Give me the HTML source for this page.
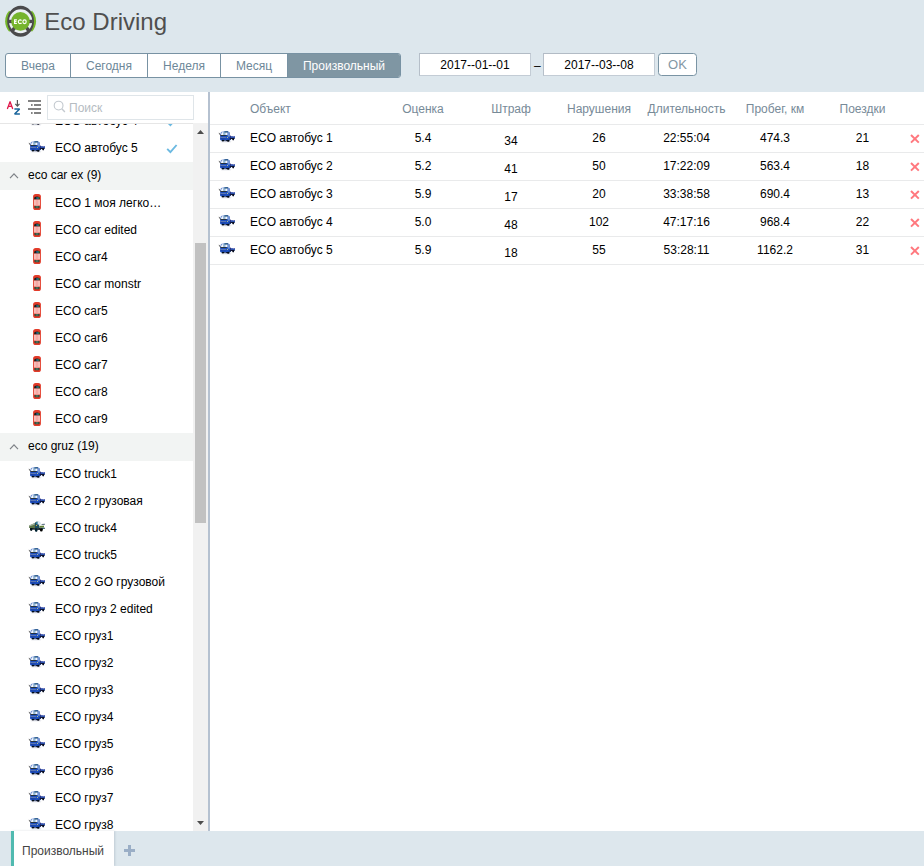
<!DOCTYPE html>
<html><head><meta charset="utf-8">
<style>
*{box-sizing:border-box;margin:0;padding:0}
html,body{width:924px;height:866px;overflow:hidden;background:#dde7ed;font-family:"Liberation Sans",sans-serif;font-size:12px;color:#000}
.abs{position:absolute}
#title{left:44.3px;top:8px;font-size:24px;line-height:28px;color:#4f4f4f;white-space:nowrap}
#tabs{left:5px;top:53px;height:25px;display:flex;border:1px solid #7892a3;border-radius:3px;background:#fff;overflow:hidden}
#tabs div{height:23px;line-height:25px;text-align:center;color:#6d8798;font-size:12px;border-right:1px solid #7892a3}
#tabs div:last-child{border-right:0;background:#7f96a3;color:#fff}
.date{top:53px;width:112px;height:23px;background:#fff;border:1px solid #c3ccd5;border-top-color:#b2bbc5;border-left-color:#b6bfc9;text-align:center;line-height:22px;font-size:12px;color:#000}
#ok{left:658px;top:53px;width:39px;height:23px;border:1px solid #7a94a4;border-radius:3.5px;background:#fff;color:#8397a4;font-size:13px;text-align:center;line-height:21.5px}
#side{left:0;top:92px;width:208px;height:739px;background:#fff;overflow:hidden}
#vsep{left:208px;top:92px;width:2px;height:739px;background:#b5c1d0}
#main{left:210px;top:92px;width:714px;height:739px;background:#fff}
#search{left:47px;top:3px;width:147px;height:25px;border:1px solid #dfe5e9;background:#fff;color:#b5bcc2;font-size:12px;line-height:25px;padding-left:21px}
#list{left:0;top:32px;width:193px;height:707px;overflow:hidden}
.it{position:absolute;left:0;width:193px;height:27px;line-height:27px;padding-left:55px;white-space:nowrap}
.gr{position:absolute;left:0;width:193px;height:28px;line-height:27px;padding-left:28px;background:#f2f4f3;white-space:nowrap}
.ic{position:absolute;left:28px;top:3px;width:18px;height:18px}
.tk{position:absolute;left:26px;top:3px;width:22px;height:18px}
.chk{position:absolute;left:166px;top:9px;width:12px;height:10px}
.chev{position:absolute;left:9px;top:10.6px;width:10px;height:6px}
#track{left:193px;top:31px;width:15px;height:708px;background:#f1f1f1}
#thumb{left:195px;top:151px;width:11px;height:280px;background:#c1c1c1}
table{border-collapse:collapse;position:absolute;left:0;top:0;width:714px;table-layout:fixed}
th{height:32px;padding-top:2px;font-weight:normal;color:#778a98;font-size:12px;text-align:center;border-bottom:1px solid #e9eaeb}
td{height:28px;text-align:center;border-bottom:1px solid #e9eaeb;font-size:12px;position:relative}
th.l,td.l{text-align:left}
td .tk{left:6px;top:3px}
td.p{padding-top:6px}
.x{position:absolute;left:3.8px;top:9.2px;width:10px;height:10px}
#bottom{left:0;top:831px;width:924px;height:35px;background:#dde7ed}
#btab{box-shadow:1px 0 2px rgba(60,80,100,0.18);left:11px;top:831px;width:103px;height:35px;background:#fff;border-left:3px solid #50bab0;color:#444;font-size:12px;line-height:41px;padding-left:8px}
</style></head><body>
<svg width="0" height="0" style="position:absolute">
<defs>
<filter id="bl" x="-10%" y="-10%" width="120%" height="120%"><feGaussianBlur stdDeviation="0.28"/></filter>
<symbol id="truck" viewBox="0 0 22 18">
 <g filter="url(#bl)">
 <ellipse cx="10" cy="13.8" rx="5.5" ry="0.5" fill="#a7aec0" opacity="0.5"/>
 <path d="M4.2 7.4 L5 4 L8.6 3.5 L11.8 3.3 L13.6 4.4 L13.9 8.1 L18.8 8 L18.8 10.6 L14 12.2 L12 13 L5 12.4 L4 11.4Z" fill="#1e50bf"/>
 <path d="M11.6 3.6 L13.6 4.5 L13.9 8.6 L11.8 8.8Z" fill="#7596d4"/>
 <path d="M5 7 L5.5 4.3 L11.4 3.8 L11.6 7.1Z" fill="#f4f7fb"/>
 <path d="M7.3 4.3 L9.3 4.1 L9.3 6.9 L7.5 6.9Z" fill="#3a78b4" opacity="0.8"/>
 <path d="M8.3 4.2 L8.8 4.2 L8.6 6.9 L8.1 6.9Z" fill="#c9dcee"/>
 <path d="M8.4 3.5 L11.8 3.3 L11.7 4.4 L8.6 4.6Z" fill="#0d4468"/>
 <path d="M4.5 6.9 L10.6 6.9 L10.6 7.7 L4.4 7.8Z" fill="#2b2a12"/>
 <path d="M4.3 9.1 L10 9.2 L10 9.9 L4.3 9.8Z" fill="#6f85b0"/>
 <path d="M4.6 10.5 L9.6 10.8 L9.6 11.3 L4.6 11Z" fill="#16368f"/>
 <circle cx="11.4" cy="9.5" r="0.55" fill="#e6e07a"/>
 <path d="M14.1 8.2 L18.8 8 L18.8 10 L14.1 10.3Z" fill="#2a51a8"/>
 <path d="M15.2 8.1 L18.6 7.9 L18.6 8.5 L15.2 8.7Z" fill="#6f83c9"/>
 <path d="M17.2 8 L18.3 8 L18.3 8.8 L17.2 8.8Z" fill="#c39ec4" opacity="0.8"/>
 <path d="M14.2 7.4 L14.9 7.4 L14.9 10.4 L14.2 10.4Z" fill="#2a2675"/>
 <path d="M13.6 10.3 L18.8 10 L18.2 11 L13.8 11.7Z" fill="#0b0e22"/>
 <path d="M14.9 11.1 L16.3 10.9 L16.3 11.9 L14.9 12.1Z" fill="#f4f6fa"/>
 <path d="M6 12 L13 12.3 L12.8 13.2 L6.2 13Z" fill="#0a0f2a"/>
 <rect x="8.4" y="12.3" width="1.3" height="0.8" fill="#9fb6e0"/>
 <ellipse cx="6.9" cy="12.6" rx="1.2" ry="0.9" fill="#060919"/>
 <ellipse cx="12.3" cy="12.8" rx="1.3" ry="1" fill="#060919"/>
 <ellipse cx="17.2" cy="11.3" rx="0.9" ry="1.1" fill="#060919"/>
 <path d="M3 4.9 L4.4 7.2" stroke="#444" stroke-width="0.8"/>
 </g>
</symbol>
<symbol id="mil" viewBox="0 0 22 18">
 <g filter="url(#bl)">
 <path d="M3 7.4 L8.8 5 L11 3.4 L9.4 10.2 L3.2 10Z" fill="#5a7446"/>
 <path d="M3 7.4 L8.8 5 L10.6 3.6 L9.8 6.2 L3.2 8.6Z" fill="#b4c2b6" opacity="0.8"/>
 <path d="M8.8 5 L11 3.6 L13.2 4 L13.4 10.4 L9 10.4Z" fill="#1f4d5e"/>
 <path d="M11 3.6 L13.6 3.4 L15 5 L14.6 6.8 L11.6 6.6Z" fill="#dbe7f0"/>
 <path d="M10 4.2 L11.6 3.8 L11.6 5.6 L10 6Z" fill="#2f7f9e"/>
 <circle cx="10.5" cy="7.4" r="0.6" fill="#d8b23a"/>
 <path d="M13.4 6.8 L18.2 6.6 L18.2 7.8 L13.4 8Z" fill="#e6ebe6"/>
 <path d="M15.6 5.9 L18.8 5.8 L18.8 6.7 L15.6 6.8Z" fill="#39506a"/>
 <path d="M13.4 7.9 L18 7.8 L18 9.6 L13.4 9.8Z" fill="#5f8030"/>
 <path d="M12.6 9.8 L19 9.7 L19 10.7 L12.6 10.9Z" fill="#1d4a58"/>
 <circle cx="14.5" cy="10.3" r="0.45" fill="#d8664f"/>
 <path d="M4 10 L17 10.4 L16.6 12 L4.4 11.6Z" fill="#061018"/>
 <ellipse cx="5.2" cy="11.5" rx="1.2" ry="1.4" fill="#04121a"/>
 <ellipse cx="10.2" cy="12.1" rx="1.4" ry="1.8" fill="#062430"/>
 <ellipse cx="15.3" cy="12" rx="1.4" ry="1.5" fill="#020406"/>
 </g>
</symbol>
<symbol id="car" viewBox="0 0 18 18">
 <g filter="url(#bl)">
 <rect x="5.1" y="0.9" width="7.8" height="16.1" rx="2.6" fill="#e23b29"/>
 <path d="M5.9 6.6 L6.6 3.9 Q9 3 11.4 3.9 L12.1 6.6Z" fill="#16201c"/>
 <path d="M8.2 4 L10.8 4.2 L11 6.2 L8.4 6.2Z" fill="#2a5f8a"/>
 <path d="M10 4.1 L11.2 4.3 L11.4 6 L10.2 6Z" fill="#2f7a3a"/>
 <rect x="6" y="6.6" width="6" height="6" fill="#f9bdb8"/>
 <rect x="7.8" y="7" width="2.4" height="5.4" fill="#f5a9a4"/>
 <rect x="6.5" y="12.9" width="5" height="2.3" rx="0.7" fill="#254636"/>
 <rect x="7.6" y="13.6" width="2.8" height="0.8" fill="#7fa08c"/>
 </g>
</symbol>
<symbol id="chk" viewBox="0 0 12 10"><path d="M1.2 4.9 L4.4 8.1 L10.6 1" fill="none" stroke="#6bb9e1" stroke-width="1.9"/></symbol>
<symbol id="chev" viewBox="0 0 10 6"><path d="M1 5.2 L5 0.9 L9 5.2" fill="none" stroke="#7d8186" stroke-width="1.2"/></symbol>
<symbol id="x" viewBox="0 0 10 10"><path d="M1 1 L8.8 8.6 M8.8 1 L1 8.6" fill="none" stroke="#ff787e" stroke-width="2"/></symbol>
</defs></svg>

<svg class="abs" style="left:0;top:0" width="42" height="42" viewBox="0 0 42 42">
 <defs><clipPath id="wg"><path d="M20.6 21.25 L33.03 9.66 A17 17 0 0 1 33.03 32.84Z M20.6 21.25 L8.17 32.84 A17 17 0 0 1 8.17 9.66Z"/></clipPath></defs>
 <circle cx="20.6" cy="21.25" r="15.45" fill="#76b82a" clip-path="url(#wg)"/>
 <circle cx="20.6" cy="21.25" r="12.6" fill="#ebf0f4"/>
 <path fill-rule="evenodd" fill="#4a4a4c" d="M7.200000000000001 21.25 a13.4 15.5 0 1 0 26.8 0 a13.4 15.5 0 1 0 -26.8 0Z M9.000000000000002 21.25 a11.6 11.9 0 1 0 23.2 0 a11.6 11.9 0 1 0 -23.2 0Z"/>
 <path d="M8.600000000000001 21.45 H32.6" stroke="#4a4a4c" stroke-width="3.4"/>
 <path d="M15.600000000000001 26.65 L11.400000000000002 31.85 M25.6 26.65 L29.8 31.85" stroke="#4a4a4c" stroke-width="3.4"/>
 <circle cx="20.450000000000003" cy="21.35" r="9.3" fill="#76b42e"/>
 <g fill="none" stroke="#fff" stroke-width="1.15">
  <path d="M16.9 19.9 H14.6 V23.5 H16.9 M14.6 21.65 H16.5"/>
  <path d="M21.5 20.6 A1.75 1.85 0 1 0 21.5 22.8"/>
  <ellipse cx="24.55" cy="21.7" rx="1.65" ry="1.85"/>
 </g>
</svg>
<div class="abs" id="title">Eco Driving</div>
<div class="abs" id="tabs"><div style="width:65px">Вчера</div><div style="width:77px">Сегодня</div><div style="width:73px">Неделя</div><div style="width:67px">Месяц</div><div style="width:112px">Произвольный</div></div>
<div class="abs date" style="left:419px">2017--01--01</div>
<div class="abs" style="left:534px;top:59px;font-size:12px">–</div>
<div class="abs date" style="left:543px">2017--03--08</div>
<div class="abs" id="ok">OK</div>
<div class="abs" id="side">
 <svg class="abs" style="left:0;top:0" width="46" height="30" viewBox="0 0 46 30">
  <path d="M7.5 16.5 L10.05 9.7 L12.6 16.5 M8.6 14.4 H11.5" fill="none" stroke="#e0174a" stroke-width="1.3" stroke-linejoin="round" stroke-linecap="round"/>
  <path d="M14.4 16.9 H19.6 L14.6 22.1 H19.9" fill="none" stroke="#1a659c" stroke-width="1.5" stroke-linejoin="bevel"/>
  <path d="M17.4 8 V14 M15.3 11.9 L17.4 14.2 L19.5 11.9" stroke="#555" stroke-width="1.2" fill="none"/>
  <path d="M28 9 H41 M34 13 H41 M28 17 H41 M34 21 H41 M31 13 H32.6 M31 21 H32.6" stroke="#595959" stroke-width="1.6" fill="none"/>
 </svg>
 <div class="abs" id="search">Поиск</div>
 <svg class="abs" style="left:53px;top:8px" width="14" height="14" viewBox="0 0 14 14"><circle cx="5.6" cy="5.6" r="4.4" fill="none" stroke="#c3c9cf" stroke-width="1.1"/><path d="M8.8 8.8 L11.9 11.9" stroke="#c3c9cf" stroke-width="1.4"/></svg>
 <div class="abs" style="left:0;top:31px;width:208px;height:1px;background:#e6e6e6"></div>
 <div class="abs" id="list">
<div class="it" style="top:-16px"><svg class="tk" viewBox="0 0 22 18"><use href="#truck"/></svg>ECO автобус 4<svg class="chk" viewBox="0 0 12 10"><use href="#chk"/></svg></div>
<div class="it" style="top:11px"><svg class="tk" viewBox="0 0 22 18"><use href="#truck"/></svg>ECO автобус 5<svg class="chk" viewBox="0 0 12 10"><use href="#chk"/></svg></div>
<div class="gr" style="top:38.0px"><svg class="chev" viewBox="0 0 10 6"><use href="#chev"/></svg>eco car ex (9)</div>
<div class="it" style="top:66px"><svg class="ic" viewBox="0 0 18 18"><use href="#car"/></svg>ECO 1 моя легко…</div>
<div class="it" style="top:93px"><svg class="ic" viewBox="0 0 18 18"><use href="#car"/></svg>ECO car edited</div>
<div class="it" style="top:120px"><svg class="ic" viewBox="0 0 18 18"><use href="#car"/></svg>ECO car4</div>
<div class="it" style="top:147px"><svg class="ic" viewBox="0 0 18 18"><use href="#car"/></svg>ECO car monstr</div>
<div class="it" style="top:174px"><svg class="ic" viewBox="0 0 18 18"><use href="#car"/></svg>ECO car5</div>
<div class="it" style="top:201px"><svg class="ic" viewBox="0 0 18 18"><use href="#car"/></svg>ECO car6</div>
<div class="it" style="top:228px"><svg class="ic" viewBox="0 0 18 18"><use href="#car"/></svg>ECO car7</div>
<div class="it" style="top:255px"><svg class="ic" viewBox="0 0 18 18"><use href="#car"/></svg>ECO car8</div>
<div class="it" style="top:282px"><svg class="ic" viewBox="0 0 18 18"><use href="#car"/></svg>ECO car9</div>
<div class="gr" style="top:309.0px"><svg class="chev" viewBox="0 0 10 6"><use href="#chev"/></svg>eco gruz (19)</div>
<div class="it" style="top:337px"><svg class="tk" viewBox="0 0 22 18"><use href="#truck"/></svg>ECO truck1</div>
<div class="it" style="top:364px"><svg class="tk" viewBox="0 0 22 18"><use href="#truck"/></svg>ECO 2 грузовая</div>
<div class="it" style="top:391px"><svg class="tk" viewBox="0 0 22 18"><use href="#mil"/></svg>ECO truck4</div>
<div class="it" style="top:418px"><svg class="tk" viewBox="0 0 22 18"><use href="#truck"/></svg>ECO truck5</div>
<div class="it" style="top:445px"><svg class="tk" viewBox="0 0 22 18"><use href="#truck"/></svg>ECO 2 GO грузовой</div>
<div class="it" style="top:472px"><svg class="tk" viewBox="0 0 22 18"><use href="#truck"/></svg>ECO груз 2 edited</div>
<div class="it" style="top:499px"><svg class="tk" viewBox="0 0 22 18"><use href="#truck"/></svg>ECO груз1</div>
<div class="it" style="top:526px"><svg class="tk" viewBox="0 0 22 18"><use href="#truck"/></svg>ECO груз2</div>
<div class="it" style="top:553px"><svg class="tk" viewBox="0 0 22 18"><use href="#truck"/></svg>ECO груз3</div>
<div class="it" style="top:580px"><svg class="tk" viewBox="0 0 22 18"><use href="#truck"/></svg>ECO груз4</div>
<div class="it" style="top:607px"><svg class="tk" viewBox="0 0 22 18"><use href="#truck"/></svg>ECO груз5</div>
<div class="it" style="top:634px"><svg class="tk" viewBox="0 0 22 18"><use href="#truck"/></svg>ECO груз6</div>
<div class="it" style="top:661px"><svg class="tk" viewBox="0 0 22 18"><use href="#truck"/></svg>ECO груз7</div>
<div class="it" style="top:688px"><svg class="tk" viewBox="0 0 22 18"><use href="#truck"/></svg>ECO груз8</div>
 </div>
 <div class="abs" id="track"></div>
 <div class="abs" id="thumb"></div>
 <svg class="abs" style="left:197px;top:37.8px" width="7" height="4" viewBox="0 0 7 4"><path d="M0 4 L3.5 0 L7 4Z" fill="#4d4d4d"/></svg>
 <svg class="abs" style="left:197px;top:729px" width="7" height="4" viewBox="0 0 7 4"><path d="M0 0 L3.5 4 L7 0Z" fill="#4d4d4d"/></svg>
</div>
<div class="abs" id="vsep"></div>
<div class="abs" id="main">
<table>
<colgroup><col style="width:40px"><col style="width:130px"><col style="width:86px"><col style="width:90px"><col style="width:86px"><col style="width:89px"><col style="width:88px"><col style="width:87px"><col style="width:18px"></colgroup>
<tr><th></th><th class="l">Объект</th><th>Оценка</th><th>Штраф</th><th>Нарушения</th><th>Длительность</th><th>Пробег, км</th><th>Поездки</th><th></th></tr>
<tr><td><svg class="tk" viewBox="0 0 22 18"><use href="#truck"/></svg></td><td class="l">ECO автобус 1</td><td>5.4</td><td class="p">34</td><td>26</td><td>22:55:04</td><td>474.3</td><td>21</td><td><svg class="x" viewBox="0 0 10 10"><use href="#x"/></svg></td></tr>
<tr><td><svg class="tk" viewBox="0 0 22 18"><use href="#truck"/></svg></td><td class="l">ECO автобус 2</td><td>5.2</td><td class="p">41</td><td>50</td><td>17:22:09</td><td>563.4</td><td>18</td><td><svg class="x" viewBox="0 0 10 10"><use href="#x"/></svg></td></tr>
<tr><td><svg class="tk" viewBox="0 0 22 18"><use href="#truck"/></svg></td><td class="l">ECO автобус 3</td><td>5.9</td><td class="p">17</td><td>20</td><td>33:38:58</td><td>690.4</td><td>13</td><td><svg class="x" viewBox="0 0 10 10"><use href="#x"/></svg></td></tr>
<tr><td><svg class="tk" viewBox="0 0 22 18"><use href="#truck"/></svg></td><td class="l">ECO автобус 4</td><td>5.0</td><td class="p">48</td><td>102</td><td>47:17:16</td><td>968.4</td><td>22</td><td><svg class="x" viewBox="0 0 10 10"><use href="#x"/></svg></td></tr>
<tr><td><svg class="tk" viewBox="0 0 22 18"><use href="#truck"/></svg></td><td class="l">ECO автобус 5</td><td>5.9</td><td class="p">18</td><td>55</td><td>53:28:11</td><td>1162.2</td><td>31</td><td><svg class="x" viewBox="0 0 10 10"><use href="#x"/></svg></td></tr>
</table>
</div>
<div class="abs" id="bottom"></div>
<div class="abs" id="btab">Произвольный</div>
<div class="abs" style="left:124px;top:849px;width:11px;height:3px;background:#9aaec6"></div><div class="abs" style="left:128px;top:845px;width:3px;height:11px;background:#9aaec6"></div>
</body></html>
